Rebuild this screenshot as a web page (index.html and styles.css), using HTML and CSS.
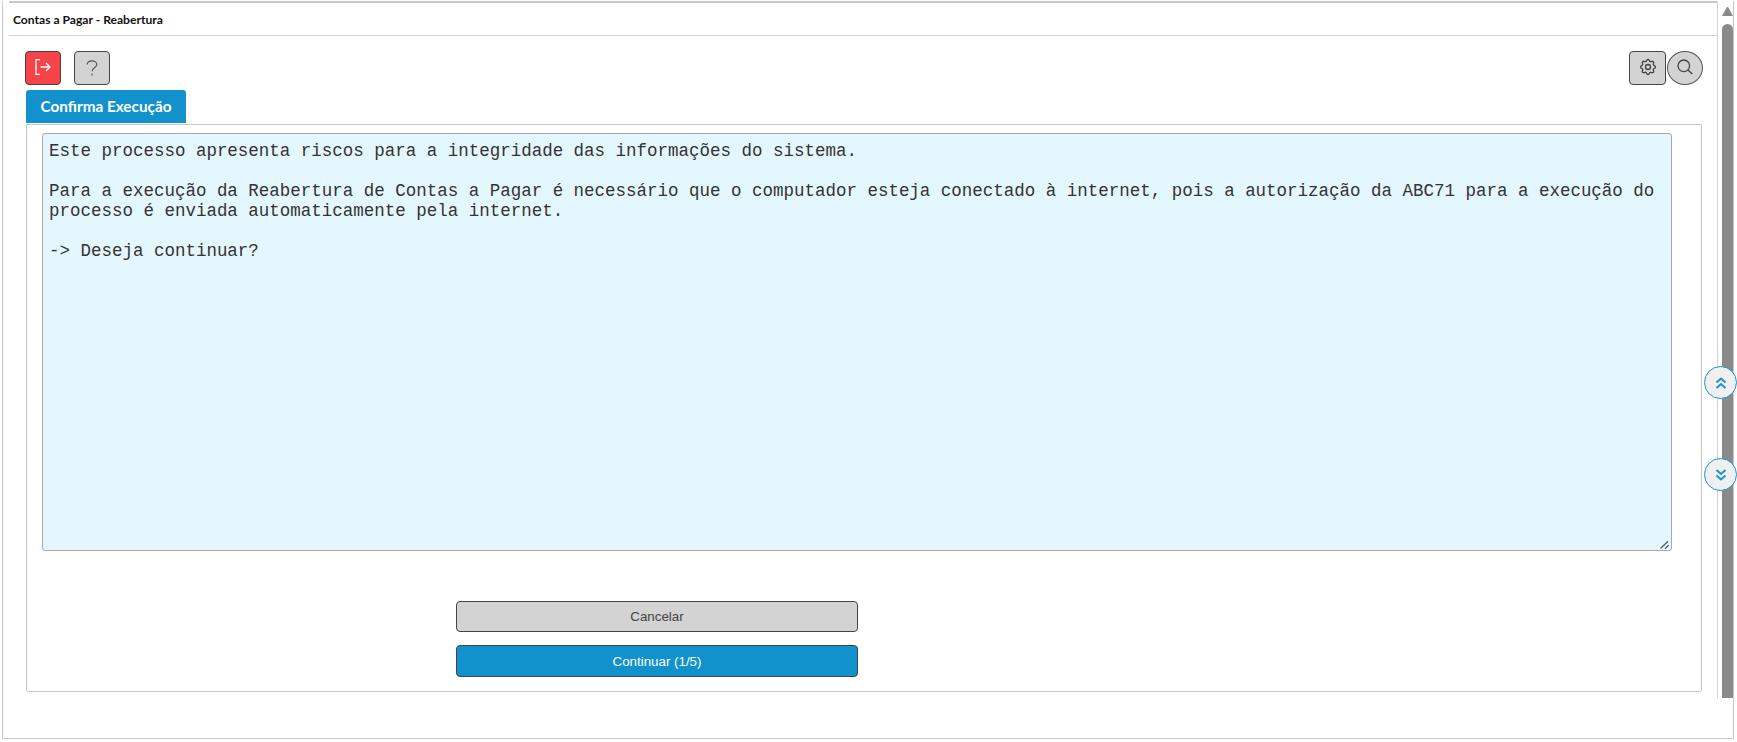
FILE: index.html
```html
<!DOCTYPE html>
<html lang="pt-BR">
<head>
<meta charset="utf-8">
<title>Contas a Pagar - Reabertura</title>
<link rel="stylesheet" href="styles.css">
</head>
<body>
<div class="frame">
  <div class="viewport">
    <main class="content">
      <h1 class="title">Contas a Pagar - Reabertura</h1>
      <div class="toolbar">
        <button class="icon-btn danger lift" aria-label="Sair">
          <svg width="16" height="16" viewBox="0 0 16 16" fill="none" stroke="#fff" stroke-width="1.3"><path d="M5 .7H1V15.3H5"/><path d="M5.5 8H15M11 4L15 8L11 12"/></svg>
        </button>
        <button class="icon-btn" aria-label="Ajuda">
          <svg width="12" height="16" viewBox="0 0 12 16" fill="none" stroke="#555" stroke-width="1.2"><path d="M1.2 4.5C1.2 2 3.3 .8 6 .8C8.7 .8 10.8 2.4 10.8 4.6C10.8 7.5 6 8 6 11.2"/><path d="M6 13.4V15.4"/></svg>
        </button>
        <div class="spacer"></div>
        <button class="icon-btn gear-btn lift" aria-label="Configurar">
          <svg width="20" height="20" viewBox="0 0 24 24" fill="none" stroke="#444" stroke-width="1.6" stroke-linejoin="round"><path d="M10.325 4.317c.426-1.756 2.924-1.756 3.35 0a1.724 1.724 0 0 0 2.573 1.066c1.543-.94 3.31.826 2.37 2.37a1.724 1.724 0 0 0 1.065 2.572c1.756.426 1.756 2.924 0 3.35a1.724 1.724 0 0 0-1.066 2.573c.94 1.543-.826 3.31-2.37 2.37a1.724 1.724 0 0 0-2.572 1.065c-.426 1.756-2.924 1.756-3.35 0a1.724 1.724 0 0 0-2.573-1.066c-1.543.94-3.31-.826-2.37-2.37a1.724 1.724 0 0 0-1.065-2.572c-1.756-.426-1.756-2.924 0-3.35a1.724 1.724 0 0 0 1.066-2.573c-.94-1.543.826-3.31 2.37-2.37c1 .608 2.296.07 2.572-1.065z"/><circle cx="12" cy="12" r="3"/></svg>
        </button>
        <button class="round-btn" aria-label="Pesquisar">
          <svg width="16" height="16" viewBox="0 0 16 16" fill="none" stroke="#444" stroke-width="1.3"><circle cx="6.8" cy="6.8" r="5.8"/><path d="M11 11L15.3 15"/></svg>
        </button>
      </div>
      <div class="tabs"><span class="tab">Confirma Execução</span></div>
      <section class="panel">
        <div class="message-wrap">
          <textarea class="message" spellcheck="false">Este processo apresenta riscos para a integridade das informações do sistema.

Para a execução da Reabertura de Contas a Pagar é necessário que o computador esteja conectado à internet, pois a autorização da ABC71 para a execução do processo é enviada automaticamente pela internet.

-&gt; Deseja continuar?</textarea>
          <svg class="grip" width="9" height="9" viewBox="0 0 9 9" fill="none" stroke="#555" stroke-width="1.2"><path d="M.5 8.5L8 1.3M5 8.7L8.6 5.2"/></svg>
        </div>
        <div class="actions">
          <button class="action">Cancelar</button>
          <button class="action primary">Continuar (1/5)</button>
        </div>
      </section>
    </main>
    <div class="scrollbar">
      <span class="arrow"></span>
      <span class="thumb"></span>
    </div>
    <button class="jump jump-up" aria-label="Subir">
      <svg width="14" height="14" viewBox="0 0 14 14" fill="none" stroke="#1a93cf" stroke-width="2"><path d="M2.5 6.5L7 2.5L11.5 6.5M2.5 12L7 8L11.5 12"/></svg>
    </button>
    <button class="jump jump-down" aria-label="Descer">
      <svg width="14" height="14" viewBox="0 0 14 14" fill="none" stroke="#1a93cf" stroke-width="2"><path d="M2.5 2L7 6L11.5 2M2.5 7.5L7 11.5L11.5 7.5"/></svg>
    </button>
  </div>
</div>
</body>
</html>
```
FILE: styles.css
```css
* { box-sizing: border-box; }
html, body { margin: 0; height: 100%; background: #fff; overflow: hidden; }
body { padding: 1px 3px 3px 2px; }
.frame { height: 738px; border: solid #c8c8c8; border-width: 0 1px 1px 1px; }
.viewport { position: relative; display: flex; height: 697px; }
.content { flex: 1; min-width: 0; padding-left: 6px; border-right: 1px solid #d4d4d4; }
.title {
  margin: 0; height: 35px; padding: 0 0 0 4px;
  border-top: 2px solid #c8c8c8; border-bottom: 1px solid #d4d4d4;
  font: 700 12.1px/34px Lato, sans-serif; color: #111;
}
.toolbar { display: flex; align-items: center; gap: 13px; height: 35px; margin: 14px 0 0 16px; padding-right: 14px; }
.spacer { flex: 1; }
.icon-btn {
  display: flex; align-items: center; justify-content: center;
  width: 36px; height: 34px; padding: 0;
  background: #d3d3d3; border: 1px solid #444; border-radius: 4px;
}
.lift { padding-bottom: 2px; }
.danger { background: #f64348; }
.gear-btn { width: 37px; }
.round-btn {
  display: flex; align-items: center; justify-content: center;
  width: 36px; height: 34px; margin-left: -12px; padding: 0 0 1px;
  background: #d3d3d3; border: 1px solid #555; border-radius: 50%;
}
.tabs { display: flex; margin: 5px 0 0 17px; }
.tab {
  height: 33px; width: 160px; text-align: center;
  background: #1192cc; color: #fff; border-radius: 3px 3px 0 0;
  font: 700 15.3px/33px Lato, sans-serif;
}
.panel {
  height: 568px; margin: 1px 15px 0 17px; padding: 8px 0 0 15px;
  border: 1px solid #c8c8c8; border-radius: 0 0 3px 3px;
}
.message-wrap { position: relative; width: 1630px; height: 418px; }
.message {
  display: block; width: 100%; height: 100%; padding: 7px 6px 5px; margin: 0;
  background: #e5f7fe; border: 1px solid #a9a9a9; border-radius: 3px; outline: none; resize: none;
  font: 17.49px/20px "Liberation Mono", monospace; color: #333;
}
.grip { position: absolute; right: 3px; bottom: 2px; }
.actions { display: flex; flex-direction: column; gap: 13px; width: 402px; margin: 50px 0 0 414px; }
.action {
  height: 31px; padding: 0; background: #d3d3d3; color: #444;
  border: 1px solid #444; border-radius: 4px;
  font: 13.33px "Liberation Sans", sans-serif;
}
.primary { height: 32px; background: #1192cc; color: #fff; }
.scrollbar { display: flex; flex-direction: column; width: 15px; padding-left: 4px; }
.arrow { margin-top: 6px; width: 11px; height: 0; border: solid transparent; border-width: 0 5.5px 9px; border-bottom-color: #8a8a8a; }
.thumb { flex: 1; width: 11px; margin-top: 8px; background: #8a8a8a; border-radius: 6px 6px 0 0; }
.jump {
  position: absolute; right: -4px; width: 33px; height: 33px; padding: 0;
  display: flex; align-items: center; justify-content: center;
  background: #f0f0f0; border: 1px solid #1a93cf; border-radius: 50%;
}
.jump-up { top: 365px; }
.jump-down { top: 457px; }
```
